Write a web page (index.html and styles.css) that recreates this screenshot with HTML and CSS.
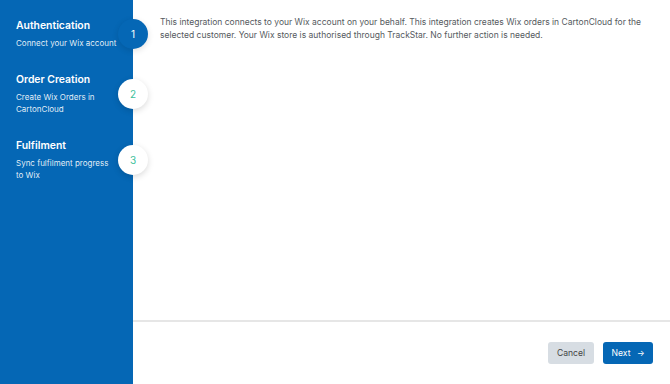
FILE: index.html
```html
<!DOCTYPE html>
<html lang="en">
<head>
  <meta charset="UTF-8">
  <title>Wix Integration</title>
  <link rel="stylesheet" href="styles.css">
</head>
<body>
  <div class="wizard">
    <!-- Steps -->
    <aside class="sidebar">
      <div class="step">
        <div class="step-text">
          <h2>Authentication</h2>
          <p>Connect your Wix account</p>
        </div>
        <div class="badge active">1</div>
      </div>
      <div class="step">
        <div class="step-text">
          <h2>Order Creation</h2>
          <p>Create Wix Orders in CartonCloud</p>
        </div>
        <div class="badge">2</div>
      </div>
      <div class="step">
        <div class="step-text">
          <h2>Fulfilment</h2>
          <p>Sync fulfilment progress to Wix</p>
        </div>
        <div class="badge">3</div>
      </div>
    </aside>

    <!-- Body -->
    <main class="panel">
      <div class="content">
        <p>This integration connects to your Wix account on your behalf. This integration creates Wix orders in CartonCloud for the selected customer. Your Wix store is authorised through TrackStar. No further action is needed.</p>
      </div>
      <div class="footer">
        <button class="button secondary">Cancel</button>
        <button class="button primary">Next <span class="arrow">&#8594;</span></button>
      </div>
    </main>
  </div>
</body>
</html>
```

FILE: styles.css
```css
:root {
  --blue: #0567b5;
  --teal: #3dbf9c;
  --text: #555a60;
}

body {
  font-family: 'Inter', 'Roboto', sans-serif;
  margin: 0;
  padding: 0;
  background-color: white;
}

.wizard {
  display: flex;
  height: 384px;
}

.sidebar {
  width: 133px;
  flex-shrink: 0;
  background-color: var(--blue);
  color: white;
  padding-top: 19px;
  position: relative;
  z-index: 1;
  box-sizing: border-box;
}

.step {
  display: flex;
  align-items: center;
  padding-left: 16px;
  margin-bottom: 24px;
}

.step-text {
  width: 101px;
  flex-shrink: 0;
}

.step h2 {
  font-size: 10.4px;
  font-weight: 600;
  line-height: 14px;
  margin: 0 0 4px;
}

.step p {
  font-size: 8px;
  line-height: 12px;
  margin: 0;
  color: rgba(255, 255, 255, 0.9);
}

.badge {
  width: 30px;
  height: 30px;
  border-radius: 50%;
  background-color: white;
  color: var(--teal);
  font-size: 10px;
  display: flex;
  align-items: center;
  justify-content: center;
  flex-shrink: 0;
  margin: 0 -15px 0 1px;
  box-shadow: 0 2px 6px rgba(0, 0, 0, 0.15);
}

.badge.active {
  background-color: var(--blue);
  color: white;
  box-shadow: 0 2px 6px rgba(0, 0, 0, 0.12);
}

.panel {
  flex: 1;
  display: flex;
  flex-direction: column;
}

.content {
  flex: 1;
  padding: 16px 24px 0 27px;
}

.content p {
  font-size: 8.5px;
  line-height: 12.6px;
  color: var(--text);
  margin: 0;
}

.footer {
  border-top: 2px solid #e6e6e6;
  height: 62px;
  display: flex;
  justify-content: flex-end;
  align-items: center;
  gap: 9px;
  padding-right: 17px;
}

.button {
  font-family: inherit;
  font-size: 8.6px;
  border: none;
  border-radius: 3px;
  height: 22px;
  padding: 0;
  white-space: nowrap;
  cursor: pointer;
}

.secondary {
  background-color: #d7dde3;
  color: #444;
  width: 46px;
}

.primary {
  background-color: var(--blue);
  color: white;
  width: 50px;
}

.arrow {
  margin-left: 4px;
  font-size: 8px;
}
```
